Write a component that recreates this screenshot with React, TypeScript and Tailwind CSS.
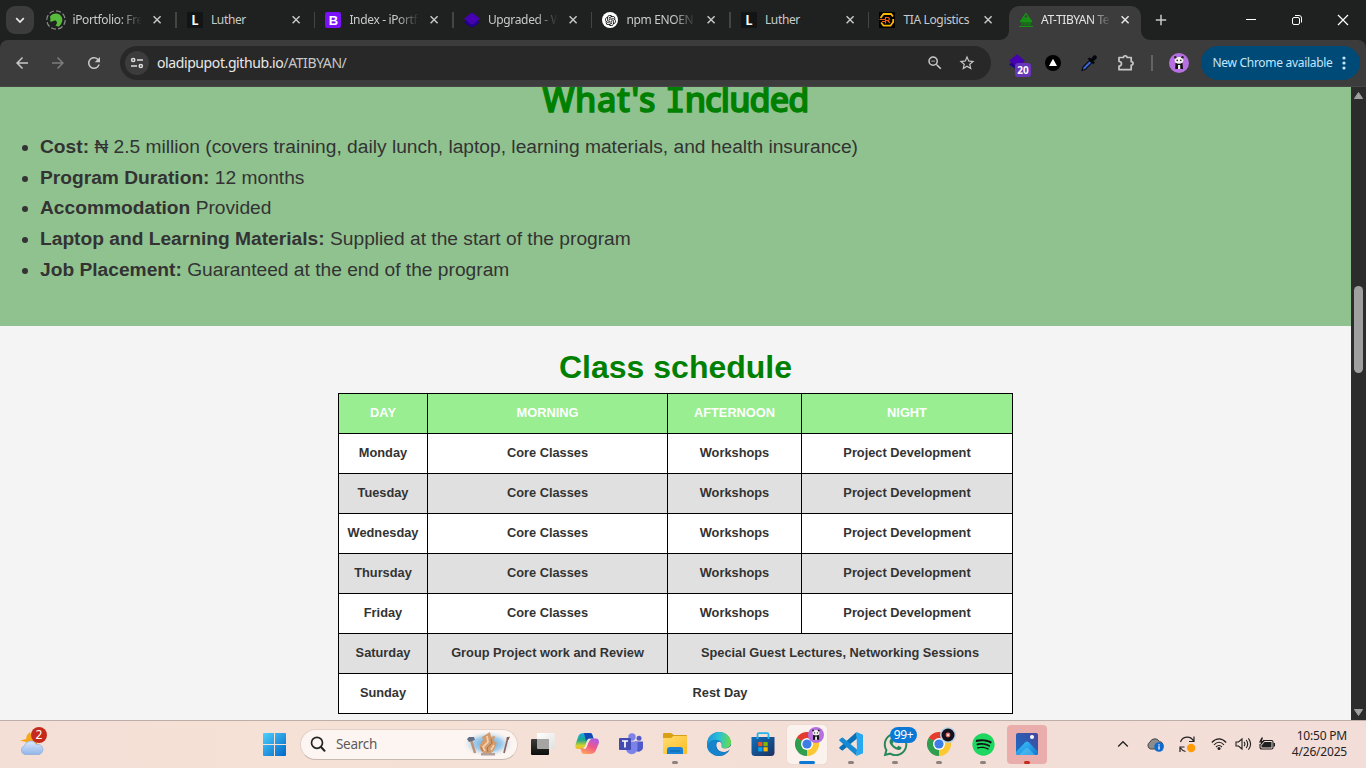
import React from "react";
import { RiOpenaiFill } from "react-icons/ri";
import { MdStarBorder, MdArrowBack, MdArrowForward, MdRefresh, MdZoomOut } from "react-icons/md";
import { FaSpotify, FaWhatsapp } from "react-icons/fa";

const UI = "font-['Noto_Sans','Open_Sans',sans-serif]";

/* ---------- Favicons ---------- */

const IPortfolioIcon = () => (
  <svg viewBox="0 0 20 20" className="-mx-0.5 h-5 w-5">
    <circle cx="10" cy="10" r="9.2" fill="none" stroke="#8d8f8d" strokeWidth="1.2" strokeDasharray="5 2.2" />
    <path d="M4 6.500C5.500 4.500 8 3.300 10.500 3.500C14.500 4 16.600 7 16.300 10.500C16 13 14.500 15.500 12.500 16.800L9.500 15.500C11.500 13.500 11.500 11.500 9.500 10.500C8 10 7 11.500 5 11.800C3.800 11.500 4 10 4.500 9Z" fill="#57bb3c" />
  </svg>
);

const LutherIcon = () => (
  <div className="flex h-4 w-4 items-center justify-center bg-[#121416] font-['Lato',sans-serif] text-[13px] font-black leading-none text-white">L</div>
);

const BootstrapIcon = () => (
  <div className="flex h-4 w-4 items-center justify-center rounded-[2px] bg-[#7a12f8] font-['Liberation_Sans',sans-serif] text-[13px] font-bold leading-none text-white">B</div>
);

const LayersIcon = ({ className = "h-4 w-4" }: { className?: string }) => (
  <svg viewBox="0 0 16 16" className={className}>
    <path d="M0 10.500L3 8.500L8 12L13 8.500L16 10.500L8 15.800Z" fill="#21008c" />
    <path d="M8 .3L16 6.700L8 13L0 6.700Z" fill="#4602b0" />
  </svg>
);

const OpenAiIcon = () => (
  <div className="flex h-4 w-4 items-center justify-center rounded-full bg-white text-black">
    <RiOpenaiFill size={13} />
  </div>
);

const TiaIcon = () => (
  <svg viewBox="0 0 16 16" className="h-4 w-4">
    <rect width="16" height="16" fill="#000" />
    <path d="M1.500 6L4.500 2H12L14 4.500" fill="none" stroke="#f8b800" strokeWidth="1.800" />
    <path d="M14.200 7V10L11.500 13.700H4.500L2.200 10.500" fill="none" stroke="#f8b800" strokeWidth="1.800" />
    <path d="M.5 7.500H6M3 9.500H6.500M6.500 11.500V5.500H9.500L10.500 7L9.500 8.500H7M8.500 8.500L11 11" fill="none" stroke="#ef5b12" strokeWidth="1.200" />
  </svg>
);

const TibyanIcon = () => (
  <svg viewBox="0 0 16 16" className="h-4 w-4">
    <path d="M8 1.500L4.800 6H11.200Z" fill="none" stroke="#179016" strokeWidth="1.300" />
    <path d="M2 8.500L5 6H11.500L14 8.500V10H2Z" fill="#179016" />
    <path d="M3.500 10H13V13.500H3.500Z" fill="#147914" />
    <path d="M5 12H6.500M8 12H9M10.500 12H11.500" stroke="#303b30" strokeWidth="1.200" />
    <path d="M1 14.500H15" stroke="#179016" strokeWidth="1" />
  </svg>
);

const CloseX = ({ bright }: { bright?: boolean }) => (
  <svg viewBox="0 0 14 14" className="h-3.5 w-3.5 shrink-0">
    <path d="M3.600 3.300L10.600 10.300M10.600 3.300L3.600 10.300" stroke={bright ? "#e6e6e6" : "#c5c7c6"} strokeWidth="1.500" fill="none" />
  </svg>
);

interface TabInfo {
  title: string;
  icon: React.ReactNode;
  fade: boolean;
}

const tabs: TabInfo[] = [
  { title: "iPortfolio: Fre", icon: <IPortfolioIcon />, fade: true },
  { title: "Luther", icon: <LutherIcon />, fade: false },
  { title: "Index - iPortf", icon: <BootstrapIcon />, fade: true },
  { title: "Upgraded - W", icon: <LayersIcon />, fade: true },
  { title: "npm ENOEN", icon: <OpenAiIcon />, fade: true },
  { title: "Luther", icon: <LutherIcon />, fade: false },
  { title: "TIA Logistics", icon: <TiaIcon />, fade: false },
];

const fadeMask = "[mask-image:linear-gradient(to_right,black_48px,transparent_70px)]";

const TabStrip = () => (
  <div className="flex h-10 items-stretch bg-[#1f2020]">
    <div className="flex w-[38px] items-center pl-1.5">
      <button className="flex h-7 w-7 items-center justify-center rounded-[9px] bg-[#3c3c3c]">
        <svg viewBox="0 0 12 12" className="h-3 w-3">
          <path d="M2.200 4.200L6 8L9.800 4.200" fill="none" stroke="#e8e8e8" strokeWidth="1.700" />
        </svg>
      </button>
    </div>
    {tabs.map((t, i) => (
      <div key={i} className="flex w-[138.5px] shrink-0 items-center pl-[10.400px]">
        {t.icon}
        <span className={`ml-2 w-[72px] shrink-0 whitespace-nowrap text-[12px] tracking-[-0.35px] text-[#c9cbca] ${t.fade ? fadeMask : ""}`}>
          {t.title}
        </span>
        <span className="ml-[5.700px] flex">
          <CloseX />
        </span>
        {i < tabs.length - 1 && <span className="ml-auto h-4 w-[1.500px] bg-[#444545]" />}
      </div>
    ))}
    <div className="-ml-[8.500px] flex items-end">
      <svg viewBox="0 0 10 10" className="h-2.5 w-2.5">
        <path d="M10 0V10H0C6 10 10 6 10 0Z" fill="#3c3c3c" />
      </svg>
      <div className="flex h-[34px] w-[132px] items-center rounded-t-[10px] bg-[#3c3c3c] pb-1.5 pl-[9px]">
        <TibyanIcon />
        <span className="ml-[7px] w-[70px] shrink-0 whitespace-nowrap text-[12px] tracking-[-0.45px] text-[#e6e6e6] [mask-image:linear-gradient(to_right,black_50px,transparent_70px)]">
          AT-TIBYAN Te
        </span>
        <span className="ml-[7px] flex">
          <CloseX bright />
        </span>
      </div>
      <svg viewBox="0 0 10 10" className="h-2.5 w-2.5">
        <path d="M0 0V10H10C4 10 0 6 0 0Z" fill="#3c3c3c" />
      </svg>
    </div>
    <div className="flex flex-1 items-center">
      <svg viewBox="0 0 12 12" className="ml-1 h-3 w-3">
        <path d="M6 .8V11.200M.8 6H11.200" stroke="#c7c7c7" strokeWidth="1.500" />
      </svg>
      <div className="ml-auto flex items-center gap-[34px] pr-[17px]">
        <svg viewBox="0 0 12 12" className="h-3 w-3">
          <path d="M1 5.500H11" stroke="#fff" strokeWidth="1" />
        </svg>
        <svg viewBox="0 0 12 12" className="h-3 w-3">
          <rect x="1.500" y="3.500" width="7" height="7" rx="1.500" fill="none" stroke="#fff" strokeWidth="1" />
          <path d="M4 1.500H8Q10.500 1.500 10.500 4V8.500" fill="none" stroke="#fff" strokeWidth="1" />
        </svg>
        <svg viewBox="0 0 12 12" className="h-3 w-3">
          <path d="M1 1L11 11M11 1L1 11" stroke="#fff" strokeWidth="1.200" />
        </svg>
      </div>
    </div>
  </div>
);

/* ---------- Toolbar ---------- */

const PandaAvatar = ({ className }: { className: string }) => (
  <svg viewBox="0 0 20 20" className={className}>
    <circle cx="10" cy="10" r="10" fill="#b56fe0" />
    <path d="M6.500 10H13.500L14 16H11.200V13.500H9V16H6.200Z" fill="#111" />
    <rect x="9" y="12" width="2.200" height="4" fill="#eee" />
    <ellipse cx="10" cy="7.300" rx="4.300" ry="3.400" fill="#f4f0f0" />
    <circle cx="6.300" cy="4.300" r="1.200" fill="#222" />
    <circle cx="13.500" cy="4.300" r="1.200" fill="#222" />
    <circle cx="8.200" cy="7.400" r=".8" fill="#222" />
    <circle cx="11.800" cy="7.400" r=".8" fill="#222" />
  </svg>
);

const Toolbar = () => (
  <div className="h-[47px] bg-[#1f2020]">
    <div className="flex h-full items-center rounded-t-[8px] border-b border-[#474747] bg-[#3c3c3c] pl-[13px]">
      <MdArrowBack size={18} color="#c7c7c7" />
      <MdArrowForward size={18} color="#7c7c7c" className="ml-[18px]" />
      <MdRefresh size={18} color="#c7c7c7" className="ml-[18px]" />
      <div className="ml-[17px] flex h-[34px] w-[871px] items-center rounded-full bg-[#282828] pl-[5px] pr-[15px]">
        <div className="flex h-6 w-6 items-center justify-center rounded-full bg-[#3c3c3c]">
          <svg viewBox="0 0 14 12" className="h-3 w-3.5">
            <g fill="none" stroke="#dedede" strokeWidth="1.500">
              <circle cx="3.200" cy="3" r="1.600" />
              <path d="M7 3H13" />
              <circle cx="10.800" cy="9" r="1.600" />
              <path d="M1 9H7" />
            </g>
          </svg>
        </div>
        <div className="ml-2 flex-1 pb-px text-[14px] tracking-[-0.4px] text-[#e8e8e8]">
          oladipupot.github.io<span className="text-[#c7c7c7]">/ATIBYAN/</span>
        </div>
        <MdZoomOut size={18} color="#c7c7c7" />
        <MdStarBorder size={18} color="#c7c7c7" className="ml-[14px]" />
      </div>
      <div className="relative ml-[18px] h-6 w-6">
        <LayersIcon className="mt-[3px] h-4 w-4" />
        <span className="absolute left-[6px] top-[12px] flex h-[14px] w-4 items-center justify-center rounded-[3px] bg-[#6836bb] text-[10px] font-bold leading-none text-white">20</span>
      </div>
      <svg viewBox="0 0 16 16" className="ml-3 h-4 w-4">
        <circle cx="8" cy="8" r="8" fill="#000" />
        <path d="M8 3.800L12 11H4Z" fill="#fff" />
      </svg>
      <svg viewBox="0 0 16 16" className="ml-5 h-4 w-4">
        <path d="M2 12L8.500 5.500L10.800 7.800L4.500 14.200L1 15.500Z" fill="#3b67d8" stroke="#080c18" strokeWidth="1.200" />
        <path d="M7 3.800L8.500 2.800L10.200 4L12.200 1.200C13.500 -.3 16 .5 15.600 3C15.300 4 13.500 4.800 12.300 6L13.500 7.800L12.200 9Z" fill="#05070b" stroke="#05070b" strokeWidth=".5" />
      </svg>
      <svg viewBox="0 0 18 18" className="ml-[20px] h-[18px] w-[18px]">
        <path d="M2 3.500H6.500C6.300 1.200 10.200 1.200 10 3.500H14.200V7.700C16.700 7.500 16.700 11.200 14.200 11V15.700H2V12.100C5.300 12.300 5.300 7.300 2 7.500Z" fill="none" stroke="#c7c7c7" strokeWidth="1.700" strokeLinejoin="round" />
      </svg>
      <span className="ml-4 h-4 w-[1.500px] bg-[#646464]" />
      <PandaAvatar className="ml-[16px] h-5 w-5" />
      <button className="ml-3 flex h-[34px] w-[159px] items-center whitespace-nowrap rounded-full bg-[#004a77] pl-3 text-[12px] tracking-[-0.3px] text-[#c2e7ff]">
        <span className="w-[119px] text-left">New Chrome available</span>
        <svg viewBox="0 0 4 14" className="ml-[10px] h-3.5 w-1">
          <g fill="#c2e7ff">
            <circle cx="2" cy="2" r="1.600" />
            <circle cx="2" cy="7" r="1.600" />
            <circle cx="2" cy="12" r="1.600" />
          </g>
        </svg>
      </button>
    </div>
  </div>
);

/* ---------- Page ---------- */

const included: { strong: string; rest: string }[] = [
  { strong: "Cost:", rest: "₦ 2.5 million (covers training, daily lunch, laptop, learning materials, and health insurance)" },
  { strong: "Program Duration:", rest: "12 months" },
  { strong: "Accommodation", rest: "Provided" },
  { strong: "Laptop and Learning Materials:", rest: "Supplied at the start of the program" },
  { strong: "Job Placement:", rest: "Guaranteed at the end of the program" },
];

const weekdays = ["Monday", "Tuesday", "Wednesday", "Thursday", "Friday"];
const cell = "h-10 border-b border-r border-black p-0 pb-0.5 text-center align-middle";

const Schedule = () => (
  <table className="mx-auto w-[675px] table-fixed border-separate border-spacing-0 border-l border-t border-black text-[12.8px] font-bold leading-5">
    <colgroup>
      <col className="w-[89px]" />
      <col className="w-[240px]" />
      <col className="w-[134px]" />
      <col className="w-[211px]" />
    </colgroup>
    <thead>
      <tr className="bg-[#98ee90] text-white">
        {["DAY", "MORNING", "AFTERNOON", "NIGHT"].map((h) => (
          <th key={h} className={cell}>{h}</th>
        ))}
      </tr>
    </thead>
    <tbody>
      {weekdays.map((d, i) => (
        <tr key={d} className={i % 2 ? "bg-[#e0e0e0]" : "bg-white"}>
          <td className={cell}>{d}</td>
          <td className={cell}>Core Classes</td>
          <td className={cell}>Workshops</td>
          <td className={cell}>Project Development</td>
        </tr>
      ))}
      <tr className="bg-[#e0e0e0]">
        <td className={cell}>Saturday</td>
        <td className={cell}>Group Project work and Review</td>
        <td className={cell} colSpan={2}>Special Guest Lectures, Networking Sessions</td>
      </tr>
      <tr className="bg-white">
        <td className={cell}>Sunday</td>
        <td className={cell} colSpan={3}>Rest Day</td>
      </tr>
    </tbody>
  </table>
);

const Page = () => (
  <div className="flex h-[633px]">
    <main className="flex-1 overflow-hidden bg-[#f4f4f4] font-['Liberation_Sans',Arial,sans-serif] text-[#333]">
      <section className="h-[239px] overflow-hidden bg-[#90c290]">
        <h2 className="-mt-[11px] flex h-14 justify-center gap-[11px] whitespace-nowrap font-['Noto_Sans',sans-serif] text-[34px] font-medium leading-[46px] text-[#008000] [-webkit-text-stroke:1.400px_#008000] [stroke-linejoin:round]">
          <span className="tracking-[0.6px]">What's</span>
          <span className="tracking-[-0.9px]">
            <span className="-ml-0.5 font-['DejaVu_Sans_Mono',monospace]">I</span>ncluded
          </span>
        </h2>
        <ul className="list-disc pl-10 text-[19.2px] leading-[30.72px]">
          {included.map((r) => (
            <li key={r.strong}>
              <strong>{r.strong}</strong> {r.rest}
            </li>
          ))}
        </ul>
      </section>
      <section className="pt-[22px]">
        <h2 className="h-[45px] text-center text-[32px] font-bold leading-[38px] text-[#008000]">Class schedule</h2>
        <Schedule />
      </section>
    </main>
    <div className="flex w-[15px] flex-col items-center bg-[#2c2c2c]">
      <svg viewBox="0 0 15 199" className="h-[199px] w-[15px]">
        <path d="M7.500 5.500L11.500 11.500H3.500Z" fill="#9f9f9f" stroke="#9f9f9f" strokeLinejoin="round" />
      </svg>
      <div className="h-[87px] w-[9px] rounded-full bg-[#9f9f9f]" />
      <svg viewBox="0 0 15 17" className="mt-auto h-[17px] w-[15px]">
        <path d="M7.500 12.500L11.500 6.500H3.500Z" fill="#9f9f9f" stroke="#9f9f9f" strokeLinejoin="round" />
      </svg>
    </div>
  </div>
);

/* ---------- Taskbar icons ---------- */

const WeatherIcon = () => (
  <svg viewBox="0 0 26 26" className="h-[26px] w-[26px]">
    <defs>
      <linearGradient id="cloud" x1="0" y1="0" x2="0" y2="1">
        <stop offset="0" stopColor="#d9e9fc" />
        <stop offset="1" stopColor="#92b5e8" />
      </linearGradient>
    </defs>
    <path d="M11 1L13 6H18V14H8L7 11L1 9.500L7 8L8 4Z" fill="#f6a51d" />
    <path d="M6 23.500A4.500 4.500 0 0 1 5.500 14.800A6.500 6.500 0 0 1 17.500 13.500A5 5 0 0 1 20 23.500Z" fill="url(#cloud)" stroke="#8aace2" strokeWidth=".7" />
  </svg>
);

const StartIcon = () => (
  <svg viewBox="0 0 23 23" className="h-[23px] w-[23px]">
    <defs>
      <linearGradient id="win" x1="0" y1="0" x2="1" y2="1">
        <stop offset="0" stopColor="#4fd0fc" />
        <stop offset="1" stopColor="#0066c8" />
      </linearGradient>
    </defs>
    <path d="M0 1Q0 0 1 0H11V11H0ZM12 0H22Q23 0 23 1V11H12ZM0 12H11V23H1Q0 23 0 22ZM12 12H23V22Q23 23 22 23H12Z" fill="url(#win)" />
  </svg>
);

const SearchArt = () => (
  <svg viewBox="0 0 52 26" className="h-[26px] w-[52px]">
    <defs>
      <radialGradient id="sky">
        <stop offset="0" stopColor="#58a5df" />
        <stop offset=".55" stopColor="#a3cdeb" />
        <stop offset="1" stopColor="#fbf4f0" stopOpacity="0" />
      </radialGradient>
    </defs>
    <ellipse cx="25" cy="13" rx="26" ry="13" fill="url(#sky)" />
    <path d="M8 9L12 22" stroke="#c09170" strokeWidth="2.500" />
    <path d="M4 8L6 6H11L12 9L6 11Z" fill="#626c85" />
    <path d="M45 6L41 22" stroke="#87645d" strokeWidth="1.700" />
    <path d="M43 7L47 5.500L45.500 9Z" fill="#7e5d60" />
    <path d="M18 24.500H32V22H18Z" fill="#b4a09a" />
    <path d="M17 14L20 9L19 6L27 1L28 6L32 5L31 10L34 12L31 19L28 22H20L17 18Z" fill="#d39a6b" />
    <path d="M22 20L20 16L25 11L24 5M28 19L31 14" fill="none" stroke="#f3d0aa" strokeWidth="1.800" />
    <path d="M25 21L24 17L29 12L28 8M20 20L18 16" fill="none" stroke="#b06e44" />
  </svg>
);

const TaskViewIcon = () => (
  <svg viewBox="0 0 24 24" className="h-6 w-6">
    <defs>
      <linearGradient id="tvd" x1="0" y1="0" x2="0" y2="1">
        <stop offset="0" stopColor="#3c3c3a" />
        <stop offset="1" stopColor="#0d0d0c" />
      </linearGradient>
      <linearGradient id="tvl" x1="0" y1="0" x2="1" y2="1">
        <stop offset="0" stopColor="#fff" />
        <stop offset="1" stopColor="#e2e0df" />
      </linearGradient>
    </defs>
    <rect x="6" y="1" width="18" height="16" rx="1" fill="url(#tvl)" />
    <rect x="0" y="7" width="18" height="16" rx="1" fill="url(#tvd)" />
    <path d="M6 7H18V17H7Q6 17 6 16Z" fill="#a5a5a3" />
  </svg>
);

const CopilotIcon = () => (
  <svg viewBox="0 0 24 24" className="h-6 w-6">
    <defs>
      <linearGradient id="cpa" x1=".2" y1="0" x2=".2" y2="1">
        <stop offset="0" stopColor="#19a5e8" />
        <stop offset=".45" stopColor="#22a987" />
        <stop offset=".8" stopColor="#d9d42b" />
        <stop offset="1" stopColor="#f3b52a" />
      </linearGradient>
      <linearGradient id="cpb" x1=".8" y1="0" x2=".3" y2="1">
        <stop offset="0" stopColor="#a75ceb" />
        <stop offset=".5" stopColor="#f0568a" />
        <stop offset="1" stopColor="#ffa05b" />
      </linearGradient>
    </defs>
    <path d="M9 1H15.500C18 1 17.500 6 19 6.500H14C11.500 6.500 11 17 6.500 17H3C0 17 0 14 1 11L3.500 4Q4.500 1 9 1Z" fill="url(#cpa)" />
    <path d="M9 1H15.500C17.500 1 17.500 5.500 19 6.500H14Q12 6.500 11 9Z" fill="#1648b5" />
    <path d="M15 22H9C6 22 6.500 17 5 16.500H10C12.500 16.500 13 6.500 17.500 6.500H21C24 6.500 24.500 9.500 23.500 12L20.500 19Q19.500 22 15 22Z" fill="url(#cpb)" />
    <path d="M14.500 7C11.500 7 11 16 8.500 17H10C12.500 16 13 7.500 16.500 6.700Z" fill="#f6e5e0" />
  </svg>
);

const TeamsIcon = () => (
  <svg viewBox="0 0 24 24" className="h-6 w-6">
    <circle cx="13" cy="5" r="3.700" fill="#7b83eb" />
    <circle cx="20" cy="6.200" r="2.500" fill="#5059c9" />
    <path d="M16 9.500H24V16A4.500 4.500 0 0 1 16 18Z" fill="#5059c9" />
    <path d="M7 9.500H18.500V16.500A5.700 5.700 0 0 1 7 16.500Z" fill="#7b83eb" />
    <rect x="0" y="6" width="12" height="12" rx="1" fill="#434ab0" />
    <path d="M3 9H9M6 9V15.500" stroke="#fff" strokeWidth="1.700" />
  </svg>
);

const ExplorerIcon = () => (
  <svg viewBox="0 0 24 24" className="h-6 w-6">
    <defs>
      <linearGradient id="fold" x1="0" y1="0" x2="1" y2="1">
        <stop offset="0" stopColor="#ffdd72" />
        <stop offset="1" stopColor="#fbbc22" />
      </linearGradient>
    </defs>
    <path d="M0 2Q0 1 1 1H8L11 3H23Q24 3 24 4V7H0Z" fill="#daa013" />
    <path d="M0 6H8L10.500 4H23Q24 4 24 5V21Q24 22 23 22H1Q0 22 0 21Z" fill="url(#fold)" />
    <path d="M4 22V17.500Q4 15 7 15H17.500Q20 15 20 17.500V22Z" fill="#1b83d6" />
    <path d="M7 19H17" stroke="#0862aa" strokeWidth="1" />
  </svg>
);

const EdgeIcon = () => (
  <svg viewBox="0 0 24 24" className="h-6 w-6">
    <defs>
      <linearGradient id="eg1" x1="0" y1=".2" x2="1" y2=".3">
        <stop offset="0" stopColor="#1b96d8" />
        <stop offset=".5" stopColor="#2cc0d8" />
        <stop offset="1" stopColor="#65dc4b" />
      </linearGradient>
      <linearGradient id="eg2" x1="0" y1="0" x2="1" y2="1">
        <stop offset="0" stopColor="#1482d2" />
        <stop offset="1" stopColor="#124f91" />
      </linearGradient>
    </defs>
    <circle cx="12" cy="12" r="12" fill="url(#eg2)" />
    <path d="M.2 11C1 4.500 6 0 12.200 0C19 0 24 5 24 10.500C24 14 21 16.500 18 16.500C15.500 16.500 14.300 15.500 14.400 14.800C15.500 12.500 14.500 9 10.500 8.500C6 8 2 9 .2 14Z" fill="url(#eg1)" />
    <path d="M10 10C8 15 11 20 17 20C19 20 20.500 19.600 22.700 17.500L24 19V13.500C22 16.500 18 17 15.500 16C14 15.300 15 14 14.500 12C14 10 12 9 10 10Z" fill="#f6dfd5" />
    <path d="M.2 14C2 7 11 6 14 10C10 9 8 12 9 15.500C10 19.500 16 22 22 18.500C18 24 11 25.500 5.500 22C2 20 0 17 .2 14Z" fill="#1684cc" />
  </svg>
);

const StoreIcon = () => (
  <svg viewBox="0 0 24 24" className="h-6 w-6">
    <defs>
      <linearGradient id="store" x1="0" y1="0" x2="1" y2="1">
        <stop offset="0" stopColor="#0f6fbc" />
        <stop offset="1" stopColor="#1c315f" />
      </linearGradient>
    </defs>
    <path d="M.5 5H23.500V20.500Q23.500 24 20 24H4Q.5 24 .5 20.500Z" fill="url(#store)" />
    <path d="M6.500 7V2.500Q6.500 1.200 7.800 1.200H16.200Q17.500 1.200 17.500 2.500V7" fill="none" stroke="#27b4ec" strokeWidth="1.800" />
    <path d="M7.200 10H11.400V14.200H7.200Z" fill="#f25022" />
    <path d="M12.500 10H16.700V14.200H12.500Z" fill="#7fba00" />
    <path d="M7.200 15.200H11.400V19.400H7.200Z" fill="#00a4ef" />
    <path d="M12.500 15.200H16.700V19.400H12.500Z" fill="#ffb900" />
  </svg>
);

const ChromeIcon = () => (
  <svg viewBox="0 0 24 24" className="h-6 w-6">
    <path d="M12 12L1.600 6A12 12 0 0 1 22.400 6Z" fill="#e33b2e" />
    <path d="M12 12L22.400 6A12 12 0 0 1 12 24Z" fill="#fcc934" />
    <path d="M12 12L12 24A12 12 0 0 1 1.600 6Z" fill="#2f9e4f" />
    <path d="M12 6H22.400L17.200 9Z" fill="#e33b2e" />
    <path d="M17.200 9L17.200 15L12 24L12 18Z" fill="#fcc934" />
    <path d="M6.800 15L1.600 6L6.800 9Z" fill="#2f9e4f" />
    <circle cx="12" cy="12" r="6" fill="#fff" />
    <circle cx="12" cy="12" r="4.600" fill="#3d7de8" />
  </svg>
);

const VsCodeIcon = () => (
  <svg viewBox="0 0 24 24" className="h-6 w-6">
    <path d="M17.500 0L18 6.500L4 18.200Q3.300 18.700 2.600 18.200L.5 16.500Q-.2 15.800 .5 15.200Z" fill="#0872b9" />
    <path d="M17.500 24L18 17.500L4 5.800Q3.300 5.300 2.600 5.800L.5 7.500Q-.2 8.200 .5 8.800Z" fill="#168bd4" />
    <path d="M17.500 0L24 2.800V21.200L17.500 24L18 18Z" fill="#29a8f2" />
  </svg>
);

const PhotosIcon = () => (
  <svg viewBox="0 0 24 24" className="h-6 w-6">
    <defs>
      <linearGradient id="pbg" x1="0" y1="1" x2="1" y2="0">
        <stop offset="0" stopColor="#1571c8" />
        <stop offset="1" stopColor="#46479b" />
      </linearGradient>
      <linearGradient id="pmt" x1="0" y1="0" x2="1" y2="1">
        <stop offset="0" stopColor="#3ccaff" />
        <stop offset="1" stopColor="#1474cf" />
      </linearGradient>
    </defs>
    <rect x="1" y="1" width="22" height="22" rx="2" fill="url(#pbg)" />
    <path d="M1 20L10 10.500Q12 8.500 14 10.500L23 20V21Q23 23 21 23H3Q1 23 1 21Z" fill="url(#pmt)" />
    <path d="M4 23L10.500 16.500Q12 15.200 13.500 16.500L20 23Z" fill="#74dcff" opacity=".4" />
    <circle cx="17" cy="5" r="2" fill="#fff" />
  </svg>
);

const Dot = ({ className }: { className: string }) => (
  <span className={`absolute bottom-0 left-1/2 h-[3px] -translate-x-1/2 rounded-full ${className}`} />
);

const apps: { name: string; node: React.ReactNode; box?: string; dot?: string; extra?: React.ReactNode }[] = [
  { name: "taskview", node: <TaskViewIcon /> },
  { name: "copilot", node: <CopilotIcon /> },
  { name: "teams", node: <TeamsIcon /> },
  { name: "explorer", node: <ExplorerIcon />, dot: "w-1.5 bg-[#8b827e]" },
  { name: "edge", node: <EdgeIcon /> },
  { name: "store", node: <StoreIcon /> },
  {
    name: "chrome",
    node: <ChromeIcon />,
    box: "bg-[#fbf2ee] shadow-[0_0_1px_#cbbab2]",
    dot: "w-4 bg-[#0a78d4]",
    extra: <PandaAvatar className="absolute left-[21px] top-[2px] h-4 w-4" />,
  },
  { name: "vscode", node: <VsCodeIcon />, dot: "w-1.5 bg-[#8b827e]" },
  {
    name: "whatsapp",
    node: <FaWhatsapp size={27} color="#25875a" />,
    dot: "w-1.5 bg-[#8b827e]",
    extra: (
      <span className="absolute left-[15px] top-[2px] flex h-4 w-[27px] items-center justify-center rounded-full bg-[#0a78d4] text-[12px] leading-none tracking-[-0.3px] text-white">99+</span>
    ),
  },
  {
    name: "chrome-2",
    node: <ChromeIcon />,
    dot: "w-1.5 bg-[#8b827e]",
    extra: (
      <svg viewBox="0 0 16 16" className="absolute left-[21px] top-[2px] h-4 w-4">
        <circle cx="8" cy="8" r="8" fill="#b9d5e8" />
        <circle cx="8" cy="8" r="6.500" fill="#15111d" />
        <circle cx="8" cy="8" r="2.400" fill="#e67263" />
        <circle cx="8" cy="8" r="1" fill="#fff" />
      </svg>
    ),
  },
  {
    name: "spotify",
    node: (
      <span className="flex rounded-full bg-[radial-gradient(circle,#101010_58%,transparent_60%)]">
        <FaSpotify size={23} color="#1ed760" />
      </span>
    ),
    dot: "w-1.5 bg-[#8b827e]",
  },
  { name: "photos", node: <PhotosIcon />, box: "bg-[#e9aeab]", dot: "w-1.5 bg-[#c42b1c]" },
];

const Taskbar = () => (
  <footer className="flex h-12 items-center border-t border-[#bcaea9] bg-linear-to-r from-[#f3dfd6] via-[#f6e1d6] via-20% to-[#f2ddd8] pb-px">
    <div className="relative flex w-[263px] pl-[19px]">
      <WeatherIcon />
      <span className="absolute -top-[4px] left-[31px] flex h-4 w-4 items-center justify-center rounded-full bg-[#c42b1c] text-[12px] leading-none text-white">2</span>
    </div>
    <StartIcon />
    <div className="ml-[14px] flex h-[31px] w-[218px] items-center rounded-full border border-[#e3d0c8] border-b-[#c9b8b0] bg-[#fcf5f1] pl-[9px]">
      <svg viewBox="0 0 16 16" className="h-4 w-4">
        <circle cx="7" cy="6.800" r="5.500" fill="none" stroke="#242424" strokeWidth="1.700" />
        <path d="M11 11L14.500 14.800" stroke="#242424" strokeWidth="2" strokeLinecap="round" />
      </svg>
      <span className="ml-[10px] w-[44px] text-[13.500px] tracking-[-0.3px] text-[#5e5a58]">Search</span>
      <span className="ml-auto mr-[2px]">
        <SearchArt />
      </span>
    </div>
    <div className="ml-[3px] flex">
      {apps.map((a) => (
        <div key={a.name} className="flex w-11 justify-center">
          <div className={`relative flex h-[39px] w-10 items-center justify-center rounded-[4px] ${a.box ?? ""}`}>
            {a.node}
            {a.extra}
            {a.dot && <Dot className={a.dot} />}
          </div>
        </div>
      ))}
    </div>
    <div className="ml-auto flex items-center pr-[19px]">
      <svg viewBox="0 0 12 12" className="h-3 w-3">
        <path d="M1.200 8.500L6 3.700L10.800 8.500" fill="none" stroke="#222" strokeWidth="1.300" />
      </svg>
      <svg viewBox="0 0 18 16" className="ml-[17px] h-4 w-[18px]">
        <path d="M4.500 13A3.800 3.800 0 0 1 4 6A5.300 5.300 0 0 1 13.500 5.500A4 4 0 0 1 15 13Z" fill="#8c8c8c" stroke="#474747" strokeWidth="1" />
        <circle cx="13" cy="11" r="4.800" fill="#0f6cce" />
        <path d="M13 10.300V13.600M13 8.300V9.400" stroke="#fff" strokeWidth="1.300" />
      </svg>
      <svg viewBox="0 0 18 18" className="ml-[14px] h-[18px] w-[18px]">
        <path d="M2.500 7A7 7 0 0 1 15.500 6M16 1.500V6.500H11M2 17V12H6.500M2.500 13Q4.500 16 7.500 16.500" fill="none" stroke="#222" strokeWidth="1.200" />
        <circle cx="13.200" cy="13" r="4.200" fill="#ff9c08" />
      </svg>
      <svg viewBox="0 0 16 14" className="ml-[15px] h-3.5 w-4">
        <g fill="none" stroke="#1f1f1f" strokeWidth="1.100">
          <path d="M.8 5.500Q8 -1.700 15.200 5.500" />
          <path d="M3 7.800Q8 2.600 13 7.800" />
          <path d="M5 10Q8 6.900 11 10" />
        </g>
        <circle cx="8" cy="11.500" r="1.500" fill="#1f1f1f" />
      </svg>
      <svg viewBox="0 0 18 14" className="ml-2 h-3.5 w-[18px]">
        <g fill="none" stroke="#1f1f1f" strokeWidth="1.100">
          <path d="M1 5H3.500L7 2V12L3.500 9H1Z" />
          <path d="M9 4.800Q10.800 7 9 9.200M11.200 3Q14.200 7 11.200 11M13.400 1.300Q17.800 7 13.400 12.700" />
        </g>
      </svg>
      <svg viewBox="0 0 18 14" className="ml-[5px] h-3.5 w-[18px]">
        <path d="M5 3.500H13.500Q15 3.500 15 5V10.500Q15 12 13.500 12H4Q2 12 2 10V7" fill="none" stroke="#1f1f1f" strokeWidth="1.100" />
        <path d="M6.500 5H13.500V10.500H3.500V8.500Z" fill="#1f1f1f" />
        <path d="M15.500 6H17V9.500H15.500Z" fill="#1f1f1f" />
        <path d="M3.500 .5L1 5.500H3L2 9L6.500 4H4L5 .5Z" fill="#1f1f1f" />
      </svg>
      <div className="ml-[8px] w-[63px] text-right text-[12px] leading-4 tracking-[-0.2px] text-[#262322]">
        <div>10:50 PM</div>
        <div>4/26/2025</div>
      </div>
    </div>
  </footer>
);

export default function App() {
  return (
    <div className={`flex h-[768px] w-[1366px] flex-col overflow-hidden ${UI}`}>
      <TabStrip />
      <Toolbar />
      <Page />
      <Taskbar />
    </div>
  );
}
